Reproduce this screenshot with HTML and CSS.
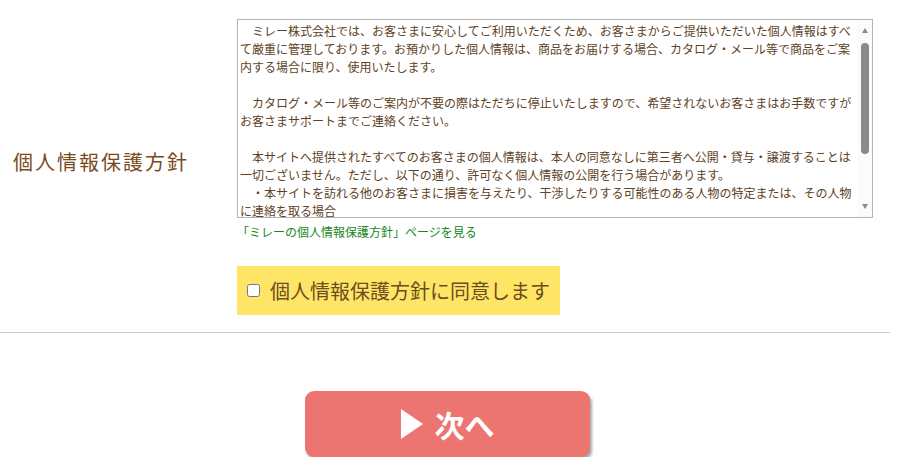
FILE: index.html
```html
<!DOCTYPE html>
<html lang="ja">
<head>
<meta charset="utf-8">
<title>個人情報保護方針</title>
<link rel="stylesheet" href="styles.css">
</head>
<body>
<div class="page">
  <div class="form-row">
    <div class="row-label">個人情報保護方針</div>
    <div class="row-body">
      <div class="policy-box">
        <div class="policy-text">　ミレー株式会社では、お客さまに安心してご利用いただくため、お客さまからご提供いただいた個人情報はすべて厳重に管理しております。お預かりした個人情報は、商品をお届けする場合、カタログ・メール等で商品をご案内する場合に限り、使用いたします。

　カタログ・メール等のご案内が不要の際はただちに停止いたしますので、希望されないお客さまはお手数ですがお客さまサポートまでご連絡ください。

　本サイトへ提供されたすべてのお客さまの個人情報は、本人の同意なしに第三者へ公開・貸与・譲渡することは一切ございません。ただし、以下の通り、許可なく個人情報の公開を行う場合があります。
　・本サイトを訪れる他のお客さまに損害を与えたり、干渉したりする可能性のある人物の特定または、その人物に連絡を取る場合
　・法令により開示が求められた場合
　・人の生命、身体または財産の保護のために必要な場合</div>
        <div class="scrollbar">
          <span class="sb-arrow sb-up"></span>
          <div class="sb-track"><span class="sb-thumb"></span></div>
          <span class="sb-arrow sb-down"></span>
        </div>
      </div>
      <a class="policy-link" href="#">「ミレーの個人情報保護方針」ページを見る</a>
      <label class="agree">
        <input type="checkbox" class="agree-check">
        <span class="agree-text">個人情報保護方針に同意します</span>
      </label>
    </div>
  </div>
  <hr class="divider">
  <div class="actions">
    <button class="next-btn" type="button">
      <svg class="next-icon" width="22" height="30" viewBox="0 0 22 30"><polygon points="0,0 22,15 0,30" fill="#fff"/></svg>
      <span>次へ</span>
    </button>
  </div>
</div>
</body>
</html>
```

FILE: styles.css
```css
html, body {
  margin: 0;
  padding: 0;
  background: #fff;
}

body {
  font-family: "Noto Sans CJK JP", "Noto Sans", sans-serif;
}

.page {
  width: 890px;
}

.form-row {
  display: grid;
  grid-template-columns: 237px 636px;
  align-items: center;
  padding-top: 19px;
}

.row-label {
  padding-left: 13px;
  padding-bottom: 10px;
  font-size: 20px;
  letter-spacing: 2px;
  color: #7a4a1c;
  line-height: 30px;
}

.row-body {
  display: flex;
  flex-direction: column;
  align-items: flex-start;
}

.policy-box {
  display: flex;
  width: 634px;
  height: 197px;
  border: 1px solid #b4b4b4;
  background: #fff;
}

.policy-text {
  flex: 1;
  padding: 2px 2px 0 2px;
  overflow: hidden;
  white-space: pre-wrap;
  font-size: 12px;
  line-height: 18px;
  color: #5e4226;
}

.scrollbar {
  width: 15px;
  display: flex;
  flex-direction: column;
  align-items: center;
  background: #fbfbfb;
}

.sb-arrow {
  width: 0;
  height: 0;
  border-left: 3.5px solid transparent;
  border-right: 3.5px solid transparent;
}

.sb-up {
  margin-top: 8px;
  border-bottom: 5px solid #8a8a8a;
}

.sb-down {
  margin-bottom: 8px;
  border-top: 5px solid #8a8a8a;
}

.sb-track {
  flex: 1;
  width: 100%;
  display: flex;
  justify-content: center;
  padding-top: 10px;
}

.sb-thumb {
  width: 8px;
  height: 111px;
  border-radius: 4px;
  background: #8a8a8a;
}

.policy-link {
  margin-top: 5px;
  font-size: 12px;
  line-height: 18px;
  color: #16871a;
  text-decoration: none;
}

.agree {
  margin-top: 25px;
  display: flex;
  align-items: center;
  gap: 10px;
  padding: 10px 10px 10px 10px;
  background: #ffe566;
  cursor: pointer;
}

.agree-check {
  margin: 0;
  width: 13px;
  height: 13px;
}

.agree-text {
  font-size: 20px;
  line-height: 29px;
  color: #6b4d22;
}

.divider {
  margin: 17px 0 0 0;
  border: 0;
  border-top: 1px solid #cccccc;
  height: 0;
}

.actions {
  display: flex;
  justify-content: center;
  padding: 58px 0 0 5px;
}

.next-btn {
  width: 285px;
  height: 66px;
  border: 0;
  border-radius: 9px;
  background: #ec7571;
  box-shadow: 2px 3px 3px rgba(0, 0, 0, 0.35);
  display: flex;
  align-items: center;
  justify-content: center;
  gap: 12px;
  color: #fff;
  font-family: "Noto Sans CJK JP", "Noto Sans", sans-serif;
  font-size: 30px;
  font-weight: bold;
  padding: 0;
}

.next-icon {
  display: block;
}
```
